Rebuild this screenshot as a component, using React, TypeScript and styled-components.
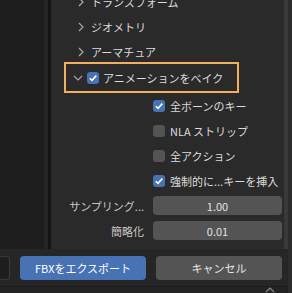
import React from 'react';
import styled, { createGlobalStyle } from 'styled-components';

const GlobalStyle = createGlobalStyle`
  html, body {
    margin: 0;
    padding: 0;
    background: #1c1c1c;
  }
  body {
    font-family: "Noto Sans CJK JP", "Noto Sans", sans-serif;
    font-size: 11px;
    color: #dcdcdc;
  }
`

const Dialog = styled.div`
  width: 292px;
  height: 293px;
  display: flex;
  overflow: hidden;
  background: #1c1c1c;
`

const Window = styled.div`
  width: 288px;
  display: flex;
  flex-direction: column;
  background: #262626;
  border-bottom-right-radius: 6px;
  overflow: hidden;
`

const Edge = styled.div`
  width: 4px;
  background: #2c2c2c;
`

const Body = styled.div`
  height: 250px;
  display: flex;
`

const Sidebar = styled.div`
  width: 44px;
  background: #1e1e1e;
`

const SideScroll = styled.div`
  width: 4px;
  background: #252525;
`

const Divider = styled.div`
  width: 3px;
  background: #141414;
`

const Panel = styled.div`
  flex: 1;
  background: #2a2a2a;
  overflow: hidden;
  display: flex;
  flex-direction: column;
  padding-top: 0;
`

const PanelScroll = styled.div`
  width: 4px;
  background: #393939;
`

const List = styled.div`
  margin-top: -11px;
  display: flex;
  flex-direction: column;
`

const SectionRow = styled.div`
  height: 25px;
  display: flex;
  align-items: center;
  padding-left: 25px;
  gap: 5px;
  white-space: nowrap;
`

const ActiveRow = styled.div`
  height: 27px;
  width: 171px;
  margin-left: 15px;
  outline: 2px solid #f1b15c;
  display: flex;
  align-items: center;
  padding-left: 7px;
  box-sizing: border-box;
  white-space: nowrap;
  margin-bottom: 2px;
`

const CheckRow = styled.div`
  height: 25px;
  display: flex;
  align-items: center;
  padding-left: 102px;
  gap: 5px;
  white-space: nowrap;
`

const Box = styled.div<{ checked: boolean }>`
  width: 12px;
  height: 12px;
  border-radius: 3px;
  background: ${props => (props.checked ? '#4772b3' : '#545454')};
  display: flex;
  align-items: center;
  justify-content: center;
  flex-shrink: 0;
`

const PropRow = styled.div`
  height: 25px;
  display: grid;
  grid-template-columns: 93px 129px;
  column-gap: 9px;
  align-items: center;
`

const PropLabel = styled.div`
  text-align: right;
  color: #c8c8c8;
  white-space: nowrap;
`

const Field = styled.div`
  height: 19px;
  background: #545454;
  border-radius: 4px;
  display: flex;
  align-items: center;
  justify-content: center;
  color: #e2e2e2;
`

const Footer = styled.div`
  height: 37px;
  display: flex;
  align-items: center;
  gap: 10px;
  margin-left: -116px;
  background: #262626;
`

const Button = styled.div<{ primary?: boolean }>`
  width: 126px;
  height: 24px;
  flex-shrink: 0;
  border-radius: 4px;
  box-sizing: border-box;
  display: flex;
  align-items: center;
  justify-content: center;
  background: ${props => (props.primary ? '#4772b3' : '#545454')};
  color: ${props => (props.primary ? '#ffffff' : '#e6e6e6')};
`

const GhostButton = styled(Button)`
  background: #1d1d1d;
  border: 1px solid #3a3a3a;
`

const BottomStrip = styled.div`
  flex: 1;
  display: flex;
  justify-content: flex-end;
  align-items: center;
  padding-right: 13px;
  background: #232323;
  border-top: 1px solid #1a1a1a;
`

const Chevron: React.FC<{ open?: boolean }> = ({ open }) => (
  <svg width="10" height="10" viewBox="0 0 10 10" style={{ flexShrink: 0 }}>
    {open ? (
      <polyline points="1,3 5,7 9,3" fill="none" stroke="#a8a8a8" strokeWidth="1.2" />
    ) : (
      <polyline points="3,1 7,5 3,9" fill="none" stroke="#a8a8a8" strokeWidth="1.2" />
    )}
  </svg>
)

const Tick = () => (
  <svg width="10" height="10" viewBox="0 0 10 10">
    <polyline points="1.8,5.2 4,7.4 8.3,2.6" fill="none" stroke="#ffffff" strokeWidth="1.6" />
  </svg>
)

const Check: React.FC<{ checked: boolean }> = ({ checked }) => (
  <Box checked={checked}>{checked && <Tick />}</Box>
)

const sections = ['トランスフォーム', 'ジオメトリ', 'アーマチュア']

const options = [
  { label: '全ボーンのキー', checked: true },
  { label: 'NLA ストリップ', checked: false },
  { label: '全アクション', checked: false },
  { label: '強制的に...キーを挿入', checked: true },
]

const props = [
  { label: 'サンプリング...', value: '1.00' },
  { label: '簡略化', value: '0.01' },
]

const App: React.FC = () => {
  return (
    <>
      <GlobalStyle />
      <Dialog>
        <Window>
          <Body>
            <Sidebar />
            <SideScroll />
            <Divider />
            <Panel>
              <List>
                {sections.map(s => (
                  <SectionRow key={s}>
                    <Chevron />
                    {s}
                  </SectionRow>
                ))}
                <ActiveRow>
                  <Chevron open />
                  <span style={{ width: 4 }} />
                  <Check checked />
                  <span style={{ marginLeft: 4 }}>アニメーションをベイク</span>
                </ActiveRow>
                {options.map(o => (
                  <CheckRow key={o.label}>
                    <Check checked={o.checked} />
                    {o.label}
                  </CheckRow>
                ))}
                {props.map(p => (
                  <PropRow key={p.label}>
                    <PropLabel>{p.label}</PropLabel>
                    <Field>{p.value}</Field>
                  </PropRow>
                ))}
              </List>
            </Panel>
            <PanelScroll />
          </Body>
          <Footer>
            <GhostButton />
            <Button primary>FBXをエクスポート</Button>
            <Button>キャンセル</Button>
          </Footer>
          <BottomStrip>
            <svg width="10" height="6" viewBox="0 0 10 6">
              <polyline points="1,5 5,1 9,5" fill="none" stroke="#8a8a8a" strokeWidth="1.2" />
            </svg>
          </BottomStrip>
        </Window>
        <Edge />
      </Dialog>
    </>
  )
}

export default App;
